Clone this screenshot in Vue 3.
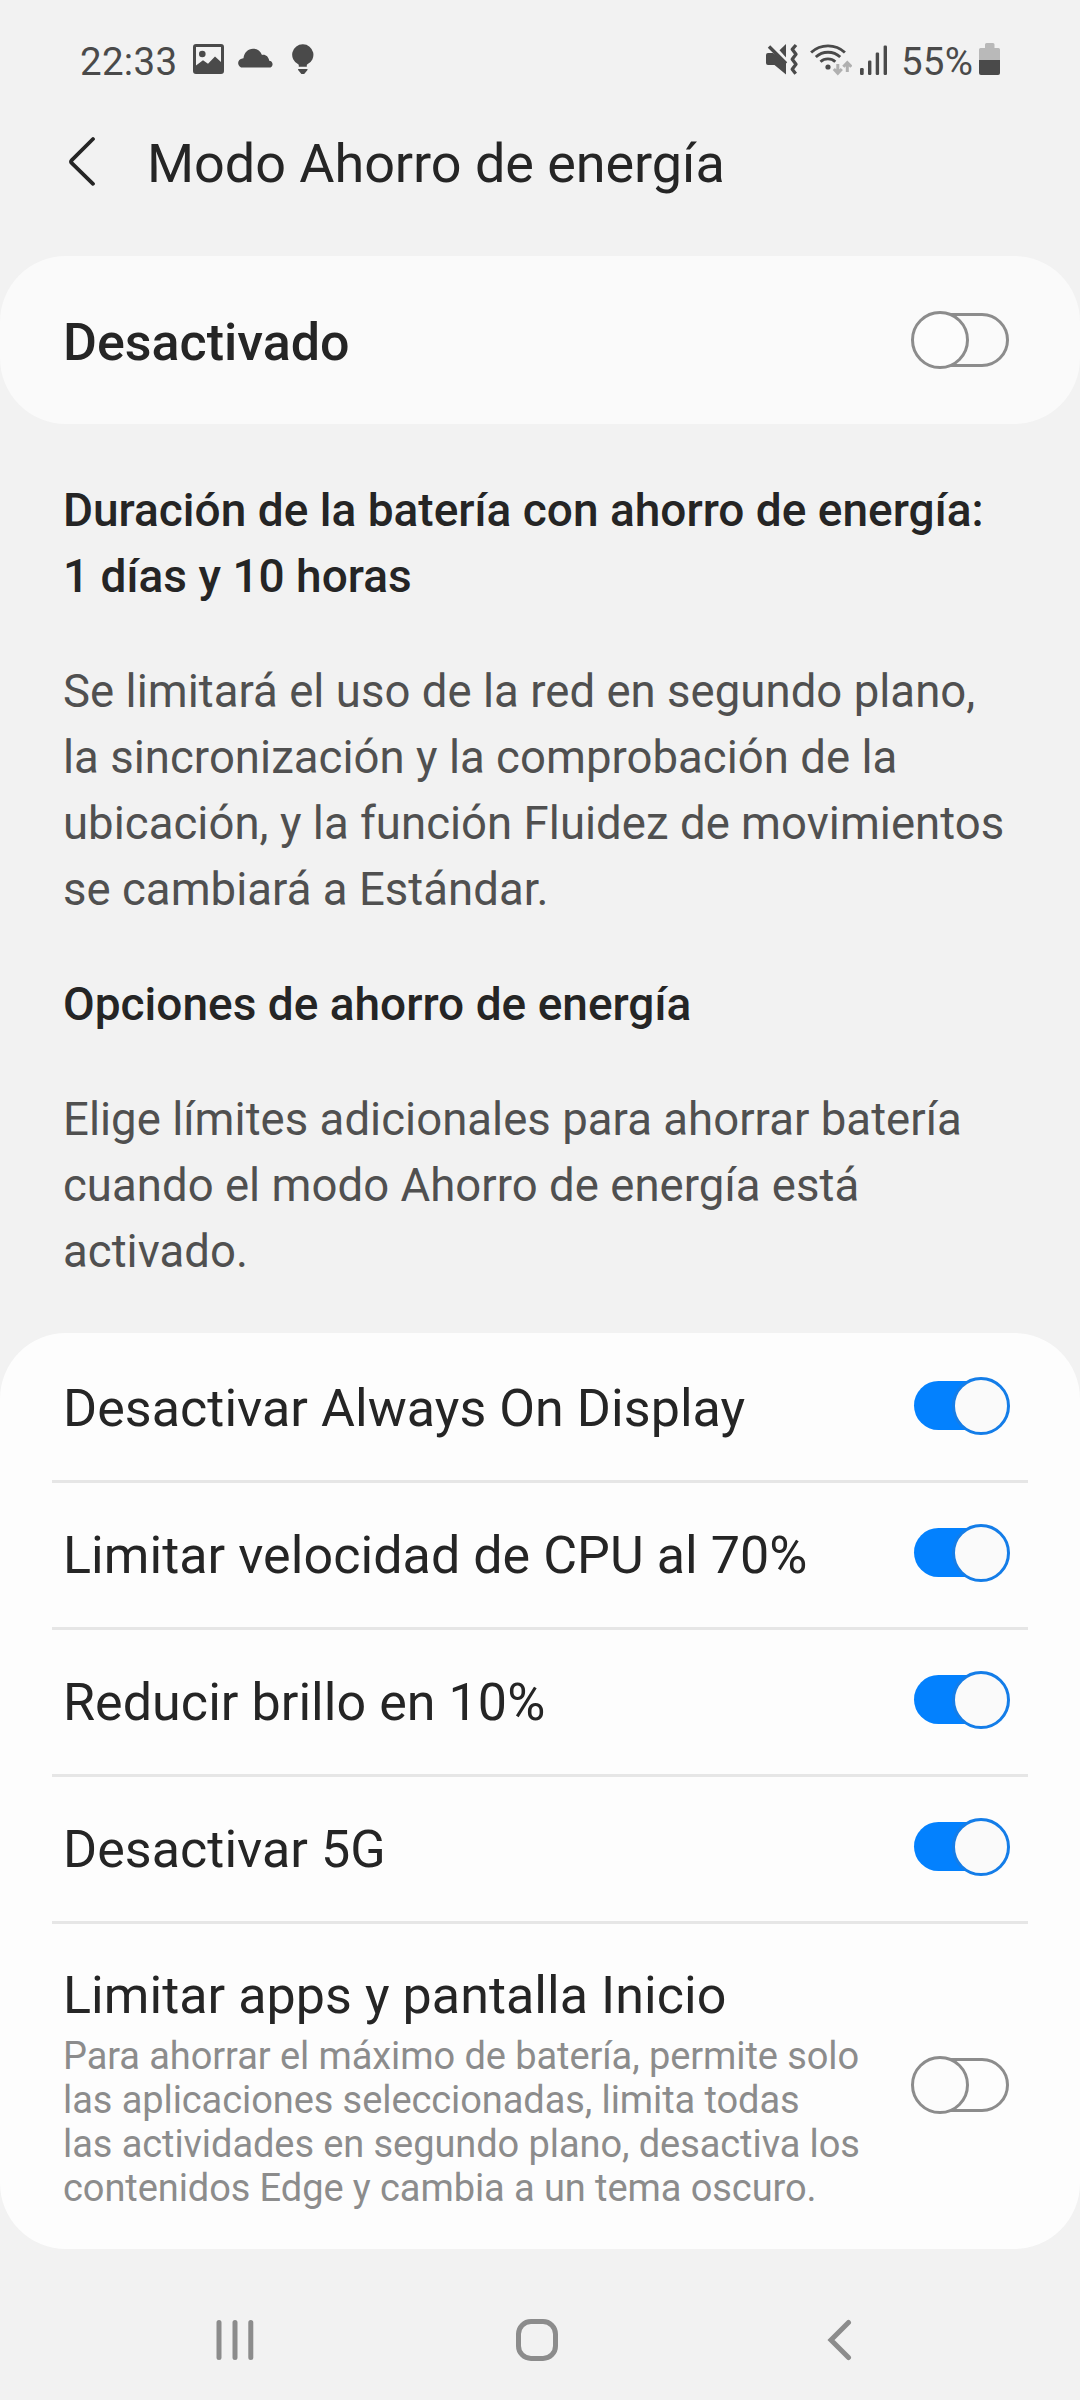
<script setup>
import { ref } from 'vue'

const saving = ref(false)
const options = ref([
  { id: 'aod', title: 'Desactivar Always On Display', on: true },
  { id: 'cpu', title: 'Limitar velocidad de CPU al 70%', on: true },
  { id: 'brillo', title: 'Reducir brillo en 10%', on: true },
  { id: '5g', title: 'Desactivar 5G', on: true },
  {
    id: 'apps',
    title: 'Limitar apps y pantalla Inicio',
    on: false,
    lines: [
      'Para ahorrar el máximo de batería, permite solo',
      'las aplicaciones seleccionadas, limita todas',
      'las actividades en segundo plano, desactiva los',
      'contenidos Edge y cambia a un tema oscuro.',
    ],
  },
])
</script>

<template>
  <div class="screen">
    <header class="status">
      <div class="group">
        <span class="clock">22:33</span>
        <svg class="ic-image" width="31" height="40" viewBox="193 40 31 40">
          <path fill-rule="evenodd" d="M196 44h25a3 3 0 0 1 3 3v24a3 3 0 0 1-3 3h-25a3 3 0 0 1-3-3V47a3 3 0 0 1 3-3zM196 47v18.5l7-5.3 5 3.600 7-7.300 6 5.500V47z" />
          <circle cx="202.300" cy="54" r="3.300" />
        </svg>
        <svg class="ic-cloud" width="35" height="40" viewBox="238 40 35 40">
          <path d="M243 67.600a4.600 4.600 0 0 1-.5-9.200c.3-.1.700-.1 1-.1C244 52.500 248 48.700 253 48.700c4 0 7.500 2.300 9 6.200 3.500-.7 6.500 1.500 7.200 5.800 2 .2 3.400 1.600 3.400 3.500 0 2-1.500 3.400-3.500 3.400z" />
        </svg>
        <svg class="ic-bulb" width="22" height="40" viewBox="291.500 40 22 40">
          <path d="M302.500 44.300a10.500 10.500 0 0 1 4.400 20c-.5.300-.6.700-.6 1.200v1.300h-8v-1.300c0-.5-.1-.9-.6-1.200a10.500 10.500 0 0 1 4.800-20z" />
          <path d="M297.600 69h9.400v1l-3.300 4h-2.800l-3.300-4z" />
        </svg>
      </div>
      <div class="group">
        <svg class="ic-mute" width="33" height="40" viewBox="766 40 33 40">
          <path d="M768 53h5l13 9v12.500L774.500 65H768a2 2 0 0 1-2-2v-8a2 2 0 0 1 2-2z" />
          <path d="M769 46.500 786 63.500" fill="none" stroke="#4a4a4a" stroke-width="3.400" />
          <path d="M786 44v13.500l-6.500-7.200z" />
          <path d="M796 45l-3.800 4.300 3.800 5-3.800 5 3.800 5-3.800 5 3.500 4.500" fill="none" stroke="#4a4a4a" stroke-width="3.300" stroke-linejoin="round" />
        </svg>
        <svg class="ic-wifi" width="42" height="40" viewBox="809.500 40 42 40">
          <g fill="none" stroke="#4a4a4a" stroke-width="2.900">
            <path d="M810.600 52.500a25 25 0 0 1 33.800 0" />
            <path d="M815.300 57a18 18 0 0 1 24.400 0" />
            <path d="M820 61.700a11 11 0 0 1 14.800 0" />
          </g>
          <circle cx="827.500" cy="67" r="2.600" />
          <g fill="none" stroke="#b0b0b0" stroke-width="3">
            <path d="M837.300 64v9M833.300 69l4 4.200 4-4.200" />
            <path d="M846.800 72V63M842.800 66.800l4-4.200 4 4.200" />
          </g>
        </svg>
        <svg class="ic-signal" width="28" height="40" viewBox="860 40 28 40">
          <rect x="860" y="68" width="3.700" height="7" rx="1.200" />
          <rect x="868" y="60.500" width="3.400" height="14.500" rx="1.200" />
          <rect x="875.700" y="52.500" width="3.400" height="22.500" rx="1.200" />
          <rect x="883.600" y="45.500" width="3.400" height="29.500" rx="1.200" />
        </svg>
        <span class="percent">55%</span>
        <svg class="ic-battery" width="21" height="40" viewBox="979 40 21 40">
          <path fill="#b9b9b9" d="M985 48v-3.500a1.500 1.500 0 0 1 1.500-1.500h6.500a1.500 1.500 0 0 1 1.500 1.500V48h4a1.500 1.500 0 0 1 1.500 1.500V60h-21V49.500a1.500 1.500 0 0 1 1.500-1.500z" />
          <path d="M979 60h21v13a2 2 0 0 1-2 2h-17a2 2 0 0 1-2-2z" />
        </svg>
      </div>
    </header>

    <div class="appbar">
      <svg width="28" height="52" viewBox="68 136 28 52">
        <path d="M93 139 71.800 160.200q-1.500 1.500 0 3L93 183.800" fill="none" stroke="#252525" stroke-width="3.800" stroke-linecap="round" />
      </svg>
      <h1>Modo Ahorro de energía</h1>
    </div>

    <section class="card master">
      <span class="master-label">Desactivado</span>
      <span class="toggle" :class="{ on: saving }" @click="saving = !saving"><i class="track"></i><i class="thumb"></i></span>
    </section>

    <section class="notes">
      <p class="strong">Duración de la batería con ahorro de energía:<br />1 días y 10 horas</p>
      <p class="body">Se limitará el uso de la red en segundo plano,<br />la sincronización y la comprobación de la<br />ubicación, y la función Fluidez de movimientos<br />se cambiará a Estándar.</p>
      <p class="strong">Opciones de ahorro de energía</p>
      <p class="body">Elige límites adicionales para ahorrar batería<br />cuando el modo Ahorro de energía está<br />activado.</p>
    </section>

    <section class="card list">
      <template v-for="(o, i) in options" :key="o.id">
        <div v-if="i" class="divider"></div>
        <div class="row" :class="{ tall: o.lines }">
          <div class="text">
            <div class="title">{{ o.title }}</div>
            <div v-if="o.lines" class="desc">
              <div v-for="l in o.lines" :key="l">{{ l }}</div>
            </div>
          </div>
          <span class="toggle" :class="{ on: o.on }" @click="o.on = !o.on"><i class="track"></i><i class="thumb"></i></span>
        </div>
      </template>
    </section>

    <nav class="nav">
      <svg width="40" height="44" viewBox="215 2318 40 44">
        <path d="M219 2322.500v35M235 2322.500v35M250.800 2322.500v35" fill="none" stroke="#8c8c8c" stroke-width="5" stroke-linecap="round" />
      </svg>
      <svg class="nav-home" width="44" height="44" viewBox="515 2318 44 44">
        <rect x="518.500" y="2321.500" width="37" height="37" rx="12.500" fill="none" stroke="#8c8c8c" stroke-width="5" />
      </svg>
      <svg class="nav-back" width="26" height="44" viewBox="826 2318 26 44">
        <path d="M848.500 2322.500 831 2340l17.500 17.500" fill="none" stroke="#8c8c8c" stroke-width="5" stroke-linecap="round" />
      </svg>
    </nav>
  </div>
</template>

<style>
body {
  margin: 0;
  background: #f2f2f2;
}
</style>

<style scoped>
.screen {
  width: 1080px;
  height: 2400px;
  overflow: hidden;
  display: flex;
  flex-direction: column;
  background: #f2f2f2;
  color: #252525;
  font-family: Roboto, sans-serif;
}
.screen svg {
  display: block;
  flex: none;
}
.status {
  height: 80px;
  box-sizing: border-box;
  padding: 40px 80px 0 80px;
  display: flex;
  justify-content: space-between;
  fill: #4a4a4a;
  color: #4a4a4a;
}
.group {
  display: flex;
}
.clock,
.percent {
  font-size: 38.5px;
  line-height: 44px;
  white-space: nowrap;
}
.clock {
  width: 113px;
  letter-spacing: 0.3px;
}
.percent {
  width: 78px;
  letter-spacing: 0.2px;
}
.ic-cloud {
  margin-left: 14px;
}
.ic-bulb {
  margin-left: 18.5px;
}
.ic-wifi {
  margin-left: 10.5px;
}
.ic-signal {
  margin-left: 8.5px;
  margin-right: 13px;
}
.appbar {
  height: 176px;
  box-sizing: border-box;
  padding: 56px 0 0 68px;
  display: flex;
  align-items: flex-start;
}
h1 {
  margin: -5px 0 0 51px;
  font-size: 54px;
  line-height: 66px;
  font-weight: 400;
  letter-spacing: -0.06px;
  white-space: nowrap;
}
.card {
  flex: none;
  border-radius: 66px;
}
.master {
  height: 168px;
  box-sizing: border-box;
  padding: 0 70px 0 63px;
  display: flex;
  align-items: center;
  justify-content: space-between;
  background: #fafafa;
}
.master-label {
  padding-top: 5px;
  font-size: 52px;
  line-height: 62px;
  font-weight: 500;
}
.notes {
  display: flex;
  flex-direction: column;
  gap: 49px;
  padding: 53px 0 49px 63px;
}
.notes p {
  margin: 0;
  line-height: 66px;
  white-space: nowrap;
}
.notes .strong {
  font-size: 46px;
  font-weight: 500;
}
.notes .body {
  margin: 1px 0 -1px;
  font-size: 45.5px;
  letter-spacing: 0.04px;
  color: #505050;
}
.list {
  background: #fdfdfd;
}
.divider {
  height: 3px;
  margin: 0 52px -3px;
  background: #e6e6e6;
}
.row {
  height: 147px;
  box-sizing: border-box;
  padding: 0 70px 0 63px;
  display: flex;
  align-items: center;
  justify-content: space-between;
}
.row.tall {
  height: 328px;
}
.text {
  padding-top: 5px;
  white-space: nowrap;
}
.tall .text {
  padding-top: 0;
  margin-top: 5px;
}
.title {
  font-size: 52px;
  line-height: 62px;
  letter-spacing: 0.06px;
}
.desc {
  margin-top: 7px;
  font-size: 38px;
  line-height: 44px;
  letter-spacing: -0.08px;
  color: #8c8c8c;
}
.toggle {
  position: relative;
  flex: none;
  width: 99px;
  height: 58px;
}
.row:not(.tall) .toggle {
  margin-bottom: 1px;
}
.track,
.thumb {
  position: absolute;
  box-sizing: border-box;
}
.track {
  left: 3px;
  top: 2px;
  width: 95px;
  height: 54px;
  border: 3px solid #8c8c8c;
  border-radius: 27px;
}
.thumb {
  left: 0;
  top: 0;
  width: 58px;
  height: 58px;
  border: 3px solid #8c8c8c;
  border-radius: 50%;
  background: #fcfcfc;
}
.on .track {
  top: 4px;
  width: 90px;
  height: 49px;
  border: 0;
  background: #0381fe;
}
.on .thumb {
  left: 41px;
  border-color: #147de8;
  background: #fafafa;
}
.nav {
  flex: 1;
  box-sizing: border-box;
  padding: 69px 0 0 215px;
  display: flex;
  align-items: flex-start;
}
.nav-home {
  margin-left: 260px;
}
.nav-back {
  margin-left: 267px;
}
</style>
